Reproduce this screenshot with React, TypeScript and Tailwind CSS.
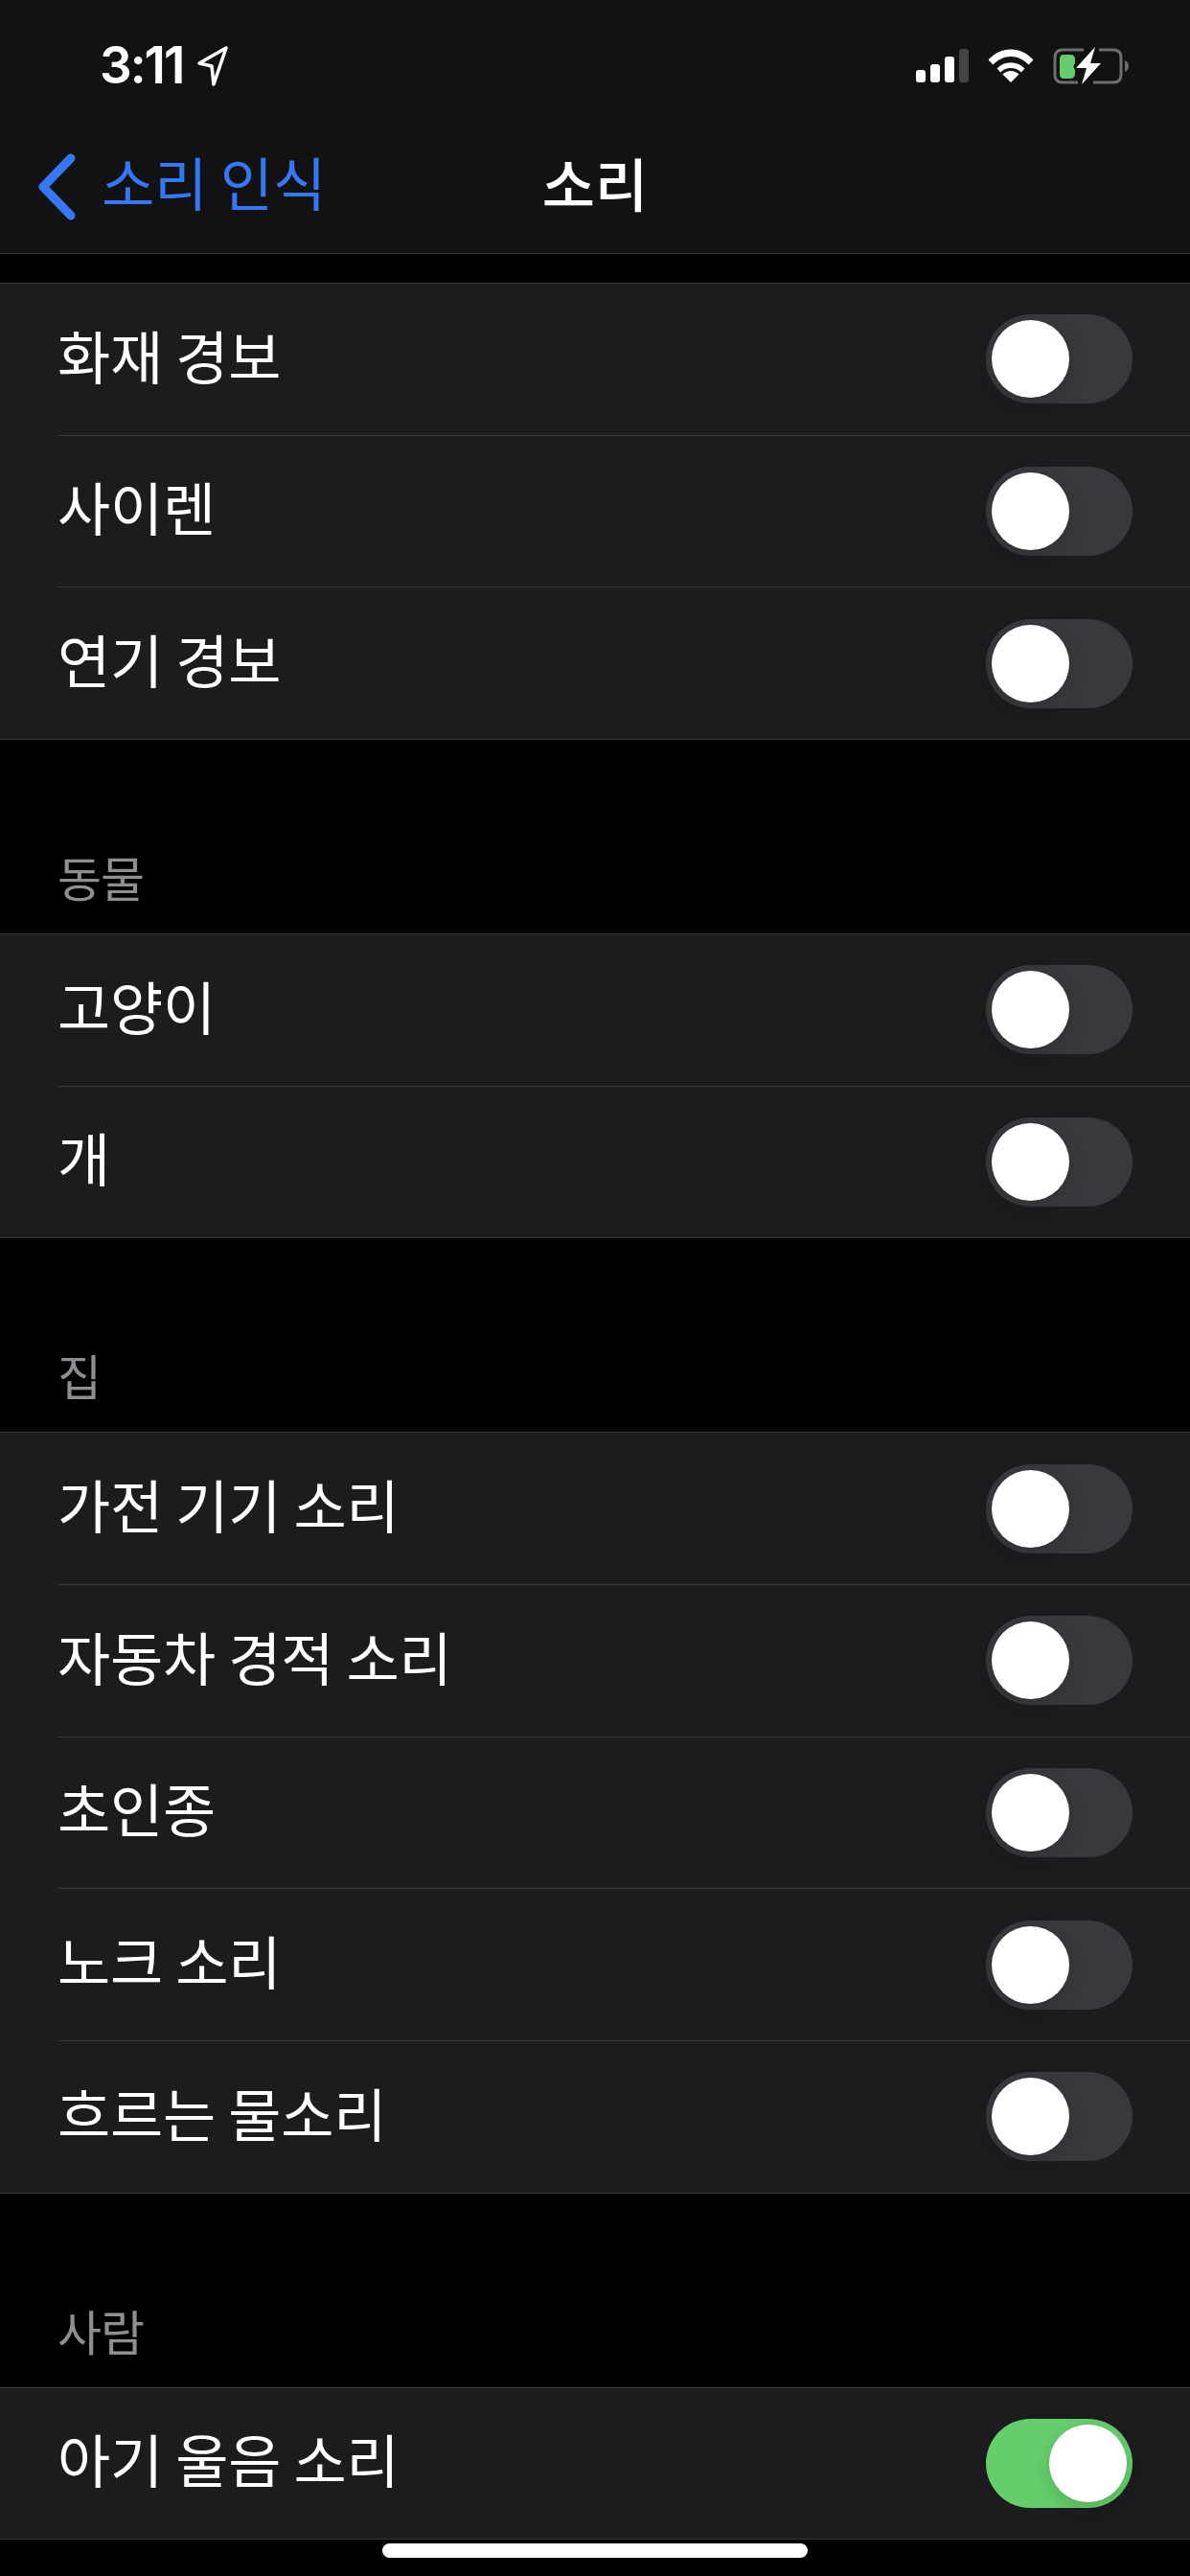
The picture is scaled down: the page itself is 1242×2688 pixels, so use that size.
const sections = [
  { title: "", items: [{ label: "화재 경보" }, { label: "사이렌" }, { label: "연기 경보" }] },
  { title: "동물", items: [{ label: "고양이" }, { label: "개" }] },
  { title: "집", items: [{ label: "가전 기기 소리" }, { label: "자동차 경적 소리" }, { label: "초인종" }, { label: "노크 소리" }, { label: "흐르는 물소리" }] },
  { title: "사람", items: [{ label: "아기 울음 소리", on: true }] },
];

const Toggle = ({ on }: { on?: boolean }) => (
  <div className={`flex h-[93px] w-[153px] items-center rounded-full px-[6px] ${on ? "justify-end bg-[#65ce6a]" : "justify-start bg-[#39393d]"}`}>
    <div className="h-[81px] w-[81px] rounded-full bg-white shadow-[0_6px_18px_rgba(0,0,0,0.15)]" />
  </div>
);

const StatusIcons = () => (
  <div className="flex items-center">
    <svg width="55" height="36" viewBox="0 0 55 36">
      <rect x="0" y="22" width="10" height="13" rx="3" fill="#fff" />
      <rect x="15" y="16" width="10" height="19" rx="3" fill="#fff" />
      <rect x="30" y="8" width="10" height="27" rx="3" fill="#fff" />
      <rect x="45" y="0" width="10" height="35" rx="3" fill="#444" />
    </svg>
    <svg className="ml-[20px]" width="48" height="37" viewBox="0 0 48 37">
      <path d="M24 36 L15.5 27.5 C20 22.8 28 22.8 32.5 27.5 Z" fill="#fff" />
      <path d="M9.5 21.5 C17.5 13 30.5 13 38.5 21.5 L34.8 25.4 C29 19.5 19 19.5 13.2 25.4 Z" fill="#fff" />
      <path d="M0.5 12.5 C13.5 -2.2 34.5 -2.2 47.5 12.5 L42.6 17.6 C32.5 6 15.5 6 5.4 17.6 Z" fill="#fff" />
    </svg>
    <svg className="ml-[20px]" width="80" height="40" viewBox="0 0 80 40">
      <path d="M32 3 H10 Q2 3 2 11 V29 Q2 37 10 37 H26 M48 3 H63 Q71 3 71 11 V29 Q71 37 63 37 H42" fill="none" stroke="#6e6e6e" strokeWidth="3" />
      <path d="M75 14 Q79 16 79 20 Q79 24 75 26 Z" fill="#6e6e6e" />
      <path d="M11 8 H18 Q23 8 23 13 V17 Q20 20 23 24 V27 Q23 33 18 33 H11 Q7 33 7 28 V13 Q7 8 11 8 Z" fill="#65ce6a" />
      <path d="M44 0 L24 22 H35 L30 39 L50 17 H39 Z" fill="#fff" />
    </svg>
  </div>
);

export default function App() {
  return (
    <div className="relative h-[2688px] w-[1242px] overflow-hidden bg-black font-['Noto_Sans_CJK_KR','Liberation_Sans',sans-serif] text-white">
      <header className="h-[265px] border-b border-[#38383a] bg-[#121212]">
        <div className="flex h-[136px] items-center justify-between pl-[104px] pr-[63px] pt-[1px]">
          <div className="flex items-center gap-[14px]">
            <span className="font-['Inter',sans-serif] text-[53px] font-semibold leading-none tracking-[-2px]">3:11</span>
            <svg width="34" height="44" viewBox="0 0 34 44">
              <path d="M31 3 L3 19 L16 22 L18 41 Z" fill="none" stroke="#fff" strokeWidth="3.5" strokeLinejoin="round" />
            </svg>
          </div>
          <StatusIcons />
        </div>
        <div className="relative flex h-[128px] items-center justify-center">
          <div className="absolute left-[39px] top-[23px] flex items-center gap-[26px] text-[#3478f6]">
            <svg width="41" height="70" viewBox="0 0 41 70">
              <path d="M35 5 L6 35 L35 65" fill="none" stroke="currentColor" strokeWidth="9" strokeLinecap="round" strokeLinejoin="round" />
            </svg>
            <span className="mb-[12px] text-[60px] leading-none">소리 인식</span>
          </div>
          <span className="mb-[20px] text-[60px] font-medium leading-none">소리</span>
        </div>
      </header>

      <main className="pt-[30px]">
        {sections.map((section) => (
          <section key={section.title}>
            {section.title && (
              <div className="flex h-[202px] items-end pb-[35px] pl-[60px] text-[50px] leading-none tracking-[-1px] text-[#8e8e93]">
                {section.title}
              </div>
            )}
            <div className="border-t border-[#38383a] bg-[#1c1c1e]">
              {section.items.map((item, i) => {
                const last = i === section.items.length - 1;
                return (
                  <div key={item.label} className={last ? "border-b border-[#38383a] pl-[60px]" : "pl-[60px]"}>
                    <div className={`flex items-center justify-between pr-[60px] ${last ? "h-[157.67px]" : "h-[158.67px] border-b border-[#38383a]"}`}>
                      <span className="mb-[10px] text-[60px] leading-none tracking-[-0.2px]">{item.label}</span>
                      <Toggle on={item.on} />
                    </div>
                  </div>
                );
              })}
            </div>
          </section>
        ))}
      </main>

      <div className="absolute bottom-[19px] left-[399px] h-[15px] w-[444px] rounded-full bg-white" />
    </div>
  );
}
